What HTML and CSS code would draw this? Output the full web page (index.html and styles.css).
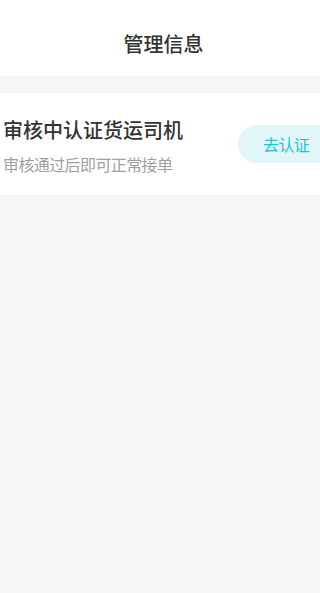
FILE: index.html
```html
<!DOCTYPE html>
<html lang="zh-CN">
<head>
<meta charset="utf-8">
<meta name="viewport" content="width=device-width, initial-scale=1">
<title>管理信息</title>
<link rel="stylesheet" href="styles.css">
</head>
<body>
<header class="topbar">
  <h1 class="topbar-title">管理信息</h1>
</header>
<main class="content">
  <section class="status-card">
    <div class="status-text">
      <div class="status-title">审核中认证货运司机</div>
      <div class="status-desc">审核通过后即可正常接单</div>
    </div>
    <button class="certify-btn" type="button">去认证</button>
  </section>
</main>
</body>
</html>
```
FILE: styles.css
```css
html, body {
  margin: 0;
  padding: 0;
}
body {
  background: #f6f6f6;
  font-family: "Noto Sans CJK SC", "Noto Sans", sans-serif;
  min-height: 593px;
}
.topbar {
  background: #ffffff;
  height: 76px;
  box-sizing: border-box;
  padding-top: 12px;
  padding-left: 7px;
  display: flex;
  align-items: center;
  justify-content: center;
}
.topbar-title {
  margin: 0;
  font-size: 20px;
  line-height: 24px;
  font-weight: 500;
  color: #333333;
}
.content {
  padding-top: 17px;
}
.status-card {
  background: #ffffff;
  height: 102px;
  box-sizing: border-box;
  display: flex;
  align-items: center;
  justify-content: space-between;
}
.status-text {
  padding-left: 3px;
  padding-top: 4px;
  display: flex;
  flex-direction: column;
  gap: 12px;
}
.status-title {
  font-size: 20px;
  line-height: 24px;
  font-weight: 500;
  color: #333333;
}
.status-desc {
  font-size: 16px;
  line-height: 20px;
  letter-spacing: -0.6px;
  color: #a0a0a0;
}
.certify-btn {
  width: 82px;
  height: 38px;
  border: none;
  border-radius: 19px 0 0 19px;
  background: #e2f6fa;
  color: #1fc2d6;
  font-family: inherit;
  font-size: 16px;
  letter-spacing: -0.6px;
  text-align: left;
  padding: 0 0 0 25px;
  margin-top: 0;
}
```
